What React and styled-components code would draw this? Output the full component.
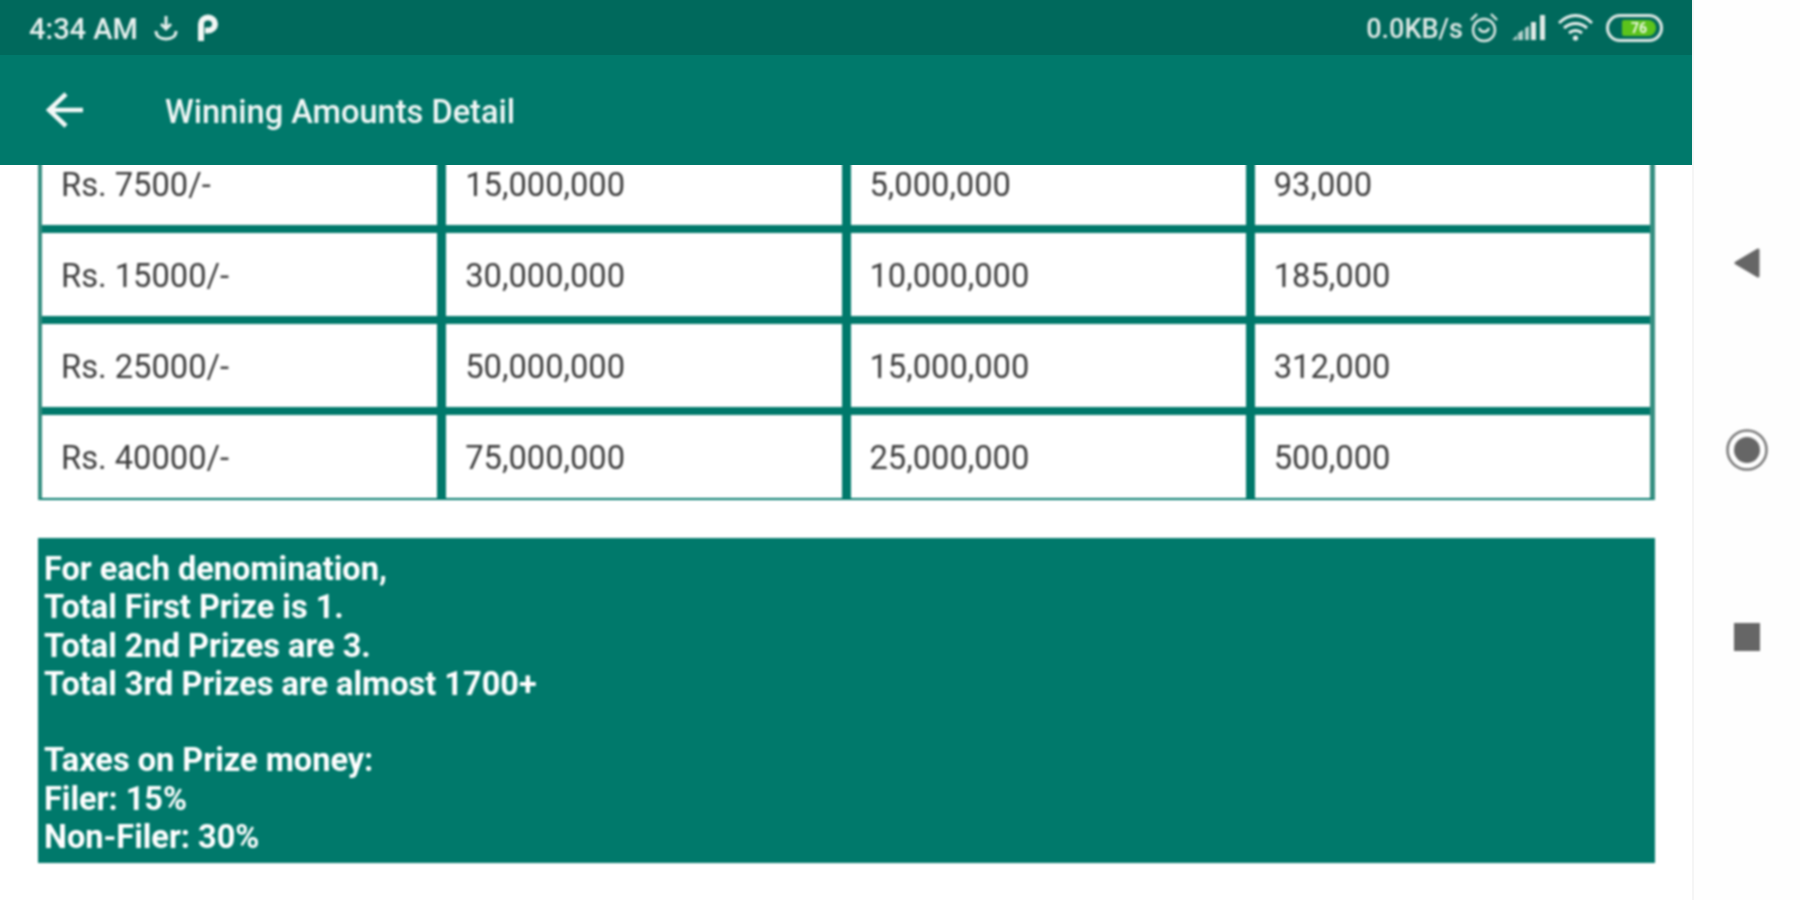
import styled, { createGlobalStyle, css } from "styled-components";

const rows = [
  ["Rs. 7500/-", "15,000,000", "5,000,000", "93,000"],
  ["Rs. 15000/-", "30,000,000", "10,000,000", "185,000"],
  ["Rs. 25000/-", "50,000,000", "15,000,000", "312,000"],
  ["Rs. 40000/-", "75,000,000", "25,000,000", "500,000"],
];

const infoLines = [
  "For each denomination,",
  "Total First Prize is 1.",
  "Total 2nd Prizes are 3.",
  "Total 3rd Prizes are almost 1700+",
  "",
  "Taxes on Prize money:",
  "Filer: 15%",
  "Non-Filer: 30%",
];

const App = () => (
  <>
    <GlobalStyle />
    <Shell>
      <Screen>
        <StatusBar>
          <StatusGroup>
            <Clock>4:34 AM</Clock>
            <svg width="24" height="26" viewBox="0 0 24 26" fill="none" stroke="#e4efec" strokeWidth="3">
              <path d="M12 1v13M7 9l5 5 5-5" />
              <path d="M2 16c0 5 4 8 10 8s10-3 10-8" />
            </svg>
            <PBadge width="24" height="28" viewBox="0 0 24 28" fill="none" stroke="#f2f7f5" strokeWidth="6">
              <path d="M5 27V10a7 6.5 0 1 1 7 6.5H9" />
            </PBadge>
          </StatusGroup>
          <StatusGroup $right>
            <Speed>0.0KB/s</Speed>
            <svg width="30" height="31" viewBox="0 0 30 31" fill="none" stroke="#dfe9e6" strokeWidth="2.400">
              <circle cx="15" cy="18" r="11" />
              <path d="M2 8l6-6M28 8l-6-6M10 16c2 5 8 5 10 0" />
            </svg>
            <svg width="33" height="25" viewBox="0 0 33 25" fill="#dfe9e6">
              <path d="M0 25l5-5v5zM6 25v-7l5-3v10zM13 25V13l4-2v14z" opacity=".8" />
              <rect x="19" y="7" width="5" height="18" />
              <rect x="28" y="0" width="5" height="25" />
            </svg>
            <svg width="35" height="27" viewBox="0 0 35 27" fill="none" stroke="#e8f0ee" strokeWidth="3">
              <path d="M1 9c10-10 23-10 33 0M6 14c7-6 16-6 23 0M11 19c4-3 9-3 13 0" />
              <circle cx="17.500" cy="24" r="2.600" fill="#e8f0ee" stroke="none" />
            </svg>
            <Battery>
              <BatteryFill>76</BatteryFill>
            </Battery>
          </StatusGroup>
        </StatusBar>

        <AppBar>
          <BackArrow width="38" height="36" viewBox="0 0 38 36" fill="none" stroke="#f4f9f8" strokeWidth="4.500">
            <path d="M37 18H4M20 2L3 18l17 16" />
          </BackArrow>
          <Title>Winning Amounts Detail</Title>
        </AppBar>

        <Scroller>
          <Table>
            {rows.map((row) =>
              row.map((value) => <Cell key={value}>{value}</Cell>)
            )}
          </Table>
          <InfoPanel>
            {infoLines.map((line, i) => (
              <InfoLine key={i}>{line}</InfoLine>
            ))}
          </InfoPanel>
        </Scroller>
      </Screen>

      <NavRail>
        <NavButton>
          <svg width="26" height="30" viewBox="0 0 26 30" fill="#666" stroke="#666" strokeWidth="3" strokeLinejoin="round">
            <path d="M2 15L24 2v26z" />
          </svg>
        </NavButton>
        <NavButton>
          <svg width="42" height="42" viewBox="0 0 42 42" fill="#666">
            <circle cx="21" cy="21" r="13" />
            <circle cx="21" cy="21" r="19.500" fill="none" stroke="#777" strokeWidth="2.500" />
          </svg>
        </NavButton>
        <NavButton>
          <StopSquare />
        </NavButton>
      </NavRail>
    </Shell>
  </>
);

// the source capture is soft, everything but the flush bars gets this
const soft = css`
  filter: blur(0.8px);
`;

const GlobalStyle = createGlobalStyle`
  html, body {
    margin: 0;
    padding: 0;
    background: #fff;
  }
  * {
    box-sizing: border-box;
  }
`;

const Shell = styled.div`
  display: flex;
  width: 1800px;
  height: 900px;
  overflow: hidden;
  font-family: Roboto, "Liberation Sans", sans-serif;
`;

const Screen = styled.div`
  width: 1692px;
  height: 900px;
  display: flex;
  flex-direction: column;
`;

const StatusBar = styled.div`
  height: 55px;
  flex: none;
  background: #00695c;
  display: flex;
  align-items: center;
  justify-content: space-between;
  padding: 0 29px;
`;

const StatusGroup = styled.div`
  ${soft}
  display: flex;
  align-items: center;
  gap: ${(props) => (props.$right ? "13px" : "16px")};
  color: #e8f1ef;
`;

const Clock = styled.span`
  padding-top: 2px;
  font-size: 29px;
  font-weight: 500;
`;

const PBadge = styled.svg`
  margin-left: 2px;
`;

const Speed = styled.span`
  margin-right: -7px;
  padding-top: 2px;
  font-size: 27px;
  font-weight: 500;
  color: #dfe9e6;
`;

const Battery = styled.div`
  width: 57px;
  height: 28px;
  border: 3px solid #dfe9e6;
  border-radius: 14px;
  padding: 3px 4px 3px 13px;
  display: flex;
`;

const BatteryFill = styled.div`
  flex: 1;
  background: #5cc31c;
  border-radius: 2px 8px 8px 2px;
  color: #eef7e6;
  font-size: 14px;
  line-height: 16px;
  font-weight: 700;
  text-align: center;
`;

const AppBar = styled.div`
  height: 110px;
  flex: none;
  background: #00796b;
  display: flex;
  align-items: center;
  padding-left: 46px;
  gap: 81px;
  position: relative;
  z-index: 1;
`;

const BackArrow = styled.svg`
  ${soft}
`;

const Title = styled.h1`
  ${soft}
  margin: 0;
  padding-top: 3px;
  font-size: 32.600px;
  font-weight: 500;
  color: #f1f7f6;
`;

const Scroller = styled.div`
  flex: 1;
  overflow: hidden;
  padding: 0 37px 0 38px;
`;

const Table = styled.div`
  ${soft}
  margin-top: -27px;
  display: grid;
  grid-template-columns: repeat(4, 1fr);
  gap: 8px 9px;
  border: solid #358f81;
  border-bottom-color: #00796b;
  border-width: 4px 5px 2px 4px;
  background: #00796b;
`;

const Cell = styled.div`
  height: 83px;
  background: #fff;
  display: flex;
  align-items: center;
  padding: 2px 0 0 19px;
  font-size: 32.700px;
  color: #3d3d3d;
`;

const InfoPanel = styled.div`
  ${soft}
  margin-top: 38px;
  height: 325px;
  background: #00796b;
  padding: 12px 6px;
`;

const InfoLine = styled.div`
  height: 38.300px;
  line-height: 38.300px;
  font-size: 32.500px;
  font-weight: 700;
  color: #fff;
`;

const NavRail = styled.div`
  flex: 1;
  background: #fefefe;
  border-left: 2px solid #f5f5f5;
  display: flex;
  flex-direction: column;
  justify-content: center;
`;

const NavButton = styled.div`
  ${soft}
  height: 187px;
  display: flex;
  align-items: center;
  justify-content: center;
`;

const StopSquare = styled.div`
  width: 26px;
  height: 28px;
  background: #666;
`;

export default App;
